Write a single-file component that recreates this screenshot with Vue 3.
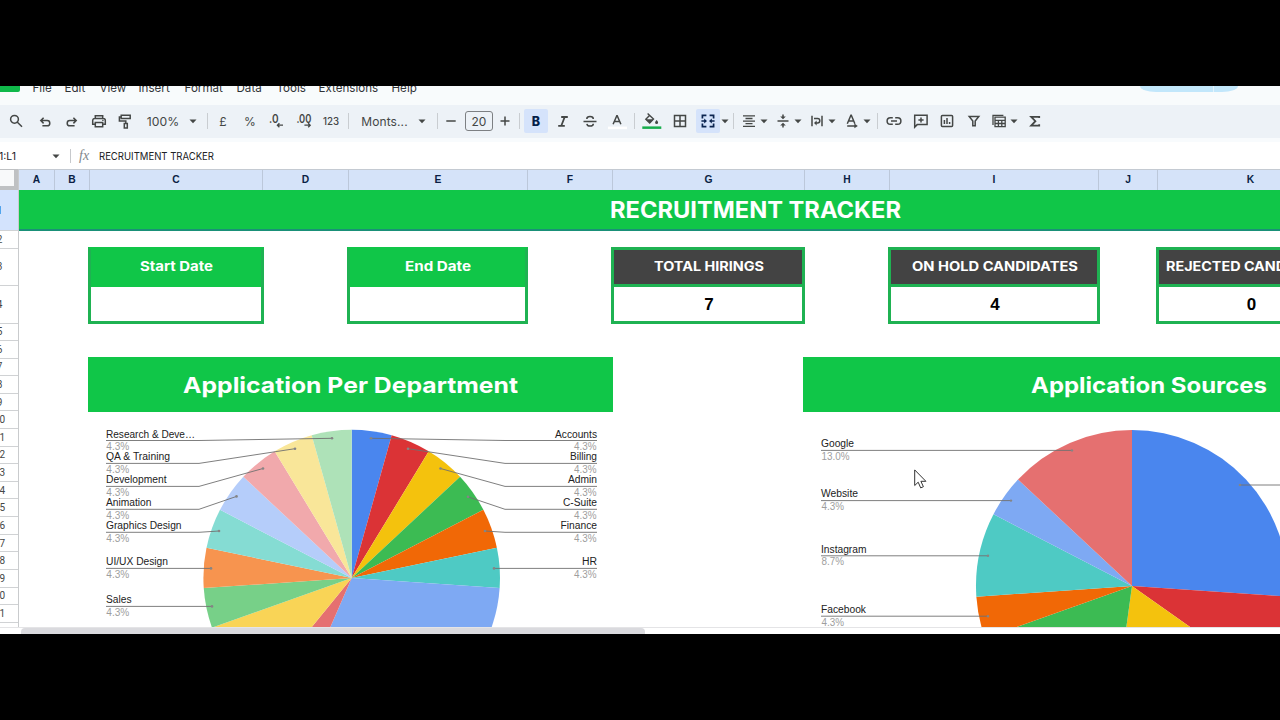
<script setup>
const menus = [
  { label: 'File', w: 32 },
  { label: 'Edit', w: 35 },
  { label: 'View', w: 39 },
  { label: 'Insert', w: 46 },
  { label: 'Format', w: 52 },
  { label: 'Data', w: 40 },
  { label: 'Tools', w: 42 },
  { label: 'Extensions', w: 73 },
  { label: 'Help', w: 40 },
]

// stroke paths on an 18x18 grid, f = filled parts
const icons = {
  search: { s: 'M11.4 7.3a3.9 3.9 0 1 1-7.8 0a3.9 3.9 0 0 1 7.8 0zM10.4 10.2L15 14.8' },
  undo: { s: 'M7.6 5.8L4.8 8.6l2.8 2.8M5 8.6h6.2a2.6 2.6 0 0 1 0 5.2H6.4' },
  redo: { s: 'M10.4 5.8l2.8 2.8l-2.8 2.8M13 8.6H6.8a2.6 2.6 0 0 0 0 5.2h4.8' },
  print: { s: 'M5.3 6.2V3.7h7.4v2.5M5.3 12.3H2.7V8.4a2 2 0 0 1 2-2h8.6a2 2 0 0 1 2 2v3.9h-2.6M5.3 10.6h7.4v4.2H5.3z', f: 'M12.2 7.7h1.4v1.4h-1.4z' },
  paint: { s: 'M5.2 3.3h9v3.2h-9zM5.2 4.9H3.4v4.2h6.4v2.4M8.3 11.6h3v4.3h-3z' },
  minus: { s: 'M4.3 9h9.4' },
  plus: { s: 'M4.5 9h9M9 4.5v9' },
  strike: { s: 'M2.5 9.4h13M12.3 7c0-1.6-1.4-2.5-3.3-2.5S5.8 5.4 5.8 7M5.9 11.8c.2 1.5 1.4 2.3 3.2 2.3c2 0 3.2-.9 3.2-2.4' },
  borders: { s: 'M3.5 3.5h11v11h-11zM9 3.5v11M3.5 9h11' },
  align: { s: 'M3 3.9h12M5.5 6.5h7M3 9.1h12M5.5 11.7h7M3 14.3h12', n: 1.3 },
  valign: { s: 'M3.5 9h11M9 2.4v3M9 15.6v-3', f: 'M6.2 4.4h5.6L9 7.3zM6.2 13.6h5.6L9 10.7z' },
  wrap: { s: 'M4 3.8v10.4M14 3.8v10.4M6 6.6h3.6a1.9 1.9 0 0 1 0 4.4H7.4', f: 'M8.6 8.6v4.8L6 11z' },
  rotate: { s: 'M4.3 11.7L7.9 3.3h.4l3.6 8.4M5.6 9.1h5M4.2 14h8', f: 'M11.4 11.6l3.4 2.4l-3.4 2.2z' },
  link: { s: 'M7.8 5.7H5.4a3.3 3.3 0 0 0 0 6.6h2.4M10.2 5.7h2.4a3.3 3.3 0 0 1 0 6.6h-2.4M6 9h6' },
  comment: { s: 'M2.7 3.3h12.4v9.3H5.2l-2.5 2.5zM9 5.4v5.2M6.4 8h5.2' },
  chart: { s: 'M4.4 3.4h9.2a1 1 0 0 1 1 1v9.2a1 1 0 0 1-1 1H4.4a1 1 0 0 1-1-1V4.4a1 1 0 0 1 1-1zM6.4 8v4M9 6v6M11.6 10v2' },
  filter: { s: 'M4.2 4.4h9.6L10.2 9v4.7H7.8V9z' },
  views: { s: 'M5 5.2h10.2v9.5H5zM5 8.3h10.2M8.4 8.3v6.4M11.8 8.3v6.4M5 11.5h10.2M3 13V3.3h10.4', n: 1.3 },
  sigma: { s: 'M13.2 6V4.8H5.2L9.4 9.2L5.2 13.6h8v-1.3', n: 1.8 },
}

// gap is the space before the item, w its own width
const tools = [
  { gap: 7, w: 18, icon: 'search' },
  { gap: 11, w: 18, icon: 'undo' },
  { gap: 9, w: 18, icon: 'redo' },
  { gap: 9, w: 18, icon: 'print' },
  { gap: 8, w: 18, icon: 'paint' },
  { gap: 13, w: 32, text: '100%', kind: 'zoom' },
  { gap: 10, w: 8, kind: 'caret' },
  { gap: 10, w: 1, kind: 'divider' },
  { gap: 6, w: 18, text: '£' },
  { gap: 9, w: 18, text: '%' },
  { gap: 9, w: 18, kind: 'decrease' },
  { gap: 9, w: 18, kind: 'increase' },
  { gap: 8, w: 20, text: '123', kind: 'digits' },
  { gap: 7, w: 1, kind: 'divider' },
  { gap: 13, w: 45, text: 'Monts...', kind: 'font' },
  { gap: 11, w: 8, kind: 'caret' },
  { gap: 11, w: 1, kind: 'divider' },
  { gap: 4, w: 18, icon: 'minus' },
  { gap: 5, w: 28, text: '20', kind: 'size' },
  { gap: 3, w: 18, icon: 'plus' },
  { gap: 5, w: 1, kind: 'divider' },
  { gap: 4, w: 24, text: 'B', kind: 'active' },
  { gap: 6, w: 18, kind: 'italic' },
  { gap: 9, w: 18, icon: 'strike' },
  { gap: 9, w: 18, kind: 'color' },
  { gap: 8, w: 1, kind: 'divider' },
  { gap: 8, w: 18, kind: 'fill' },
  { gap: 10, w: 18, icon: 'borders' },
  { gap: 7, w: 24, kind: 'merge' },
  { gap: 1, w: 8, kind: 'caret' },
  { gap: 4, w: 1, kind: 'divider' },
  { gap: 6, w: 18, icon: 'align' },
  { gap: 2, w: 8, kind: 'caret' },
  { gap: 6, w: 18, icon: 'valign' },
  { gap: 2, w: 8, kind: 'caret' },
  { gap: 6, w: 18, icon: 'wrap' },
  { gap: 2, w: 8, kind: 'caret' },
  { gap: 7, w: 18, icon: 'rotate' },
  { gap: 2, w: 8, kind: 'caret' },
  { gap: 6, w: 1, kind: 'divider' },
  { gap: 7, w: 18, icon: 'link' },
  { gap: 9, w: 18, icon: 'comment' },
  { gap: 8, w: 18, icon: 'chart' },
  { gap: 9, w: 18, icon: 'filter' },
  { gap: 7, w: 18, icon: 'views' },
  { gap: 2, w: 8, kind: 'caret' },
  { gap: 8, w: 18, icon: 'sigma' },
]

const columns = ['A', 'B', 'C', 'D', 'E', 'F', 'G', 'H', 'I', 'J', 'K']

const rowHeights = [41, 17.5, 37.5, 37.5, 17.5]
const rows = Array.from({ length: 22 }, (_, i) => ({ n: i + 1, h: rowHeights[i] ?? 17.62 }))

const cards = [
  { title: 'Start Date', w: 175.5, tw: 73, value: '', kind: 'date' },
  { title: 'End Date', w: 181.5, tw: 66, value: '', kind: 'date' },
  { title: 'TOTAL HIRINGS', w: 194, tw: 110, value: '7', kind: 'stat' },
  { title: 'ON HOLD CANDIDATES', w: 212, tw: 166, value: '4', kind: 'stat' },
  { title: 'REJECTED CANDIDATES', w: 189, tw: 171, value: '0', kind: 'stat' },
]

function slices(cx, cy, r, parts) {
  const total = parts.reduce((sum, p) => sum + p[0], 0)
  let at = 0
  return parts.map(([n, fill]) => {
    const a = (at / total) * Math.PI * 2
    at += n
    const b = (at / total) * Math.PI * 2
    const large = b - a > Math.PI ? 1 : 0
    return {
      fill,
      d: `M${cx} ${cy}L${cx + r * Math.sin(a)} ${cy - r * Math.cos(a)}A${r} ${r} 0 ${large} 1 ${cx + r * Math.sin(b)} ${cy - r * Math.cos(b)}Z`,
    }
  })
}

const departments = slices(351.7, 578, 148.3, [
  [1, '#4a86ee'],
  [1, '#db3336'],
  [1, '#f4c20d'],
  [1, '#3cbb53'],
  [1, '#f16806'],
  [1, '#4ecac4'],
  [7, '#7ea9f3'],
  [1, '#e57070'],
  [2, '#f9d456'],
  [1, '#77d088'],
  [1, '#f7944f'],
  [1, '#85dcd3'],
  [1, '#b5cdfa'],
  [1, '#f1a9ac'],
  [1, '#f9e699'],
  [1, '#aee2b8'],
])

const sources = slices(1132, 586, 156, [
  [6, '#4a86ee'],
  [2, '#db3336'],
  [4, '#f4c20d'],
  [4, '#3cbb53'],
  [1, '#f16806'],
  [2, '#4ecac4'],
  [1, '#7ea9f3'],
  [3, '#e57070'],
])

// y = underline, dx/dy = end of the leader inside the slice
const leftLabels = [
  { name: 'Research & Deve…', w: 89, y: 440.5, dx: 332, dy: 438.3 },
  { name: 'QA & Training', w: 64, y: 463.4, dx: 295, dy: 448.7 },
  { name: 'Development', w: 60.5, y: 486.4, dx: 263, dy: 468.5 },
  { name: 'Animation', w: 45.5, y: 509.3, dx: 236.5, dy: 496.4 },
  { name: 'Graphics Design', w: 75.5, y: 532.3, dx: 219, dy: 531 },
  { name: 'UI/UX Design', w: 62, y: 568.4, dx: 211, dy: 568.4 },
  { name: 'Sales', w: 25.5, y: 606.4, dx: 212, dy: 606.4 },
]
const rightLabels = [
  { name: 'Accounts', w: 42, y: 440.5, dx: 371, dy: 438.3 },
  { name: 'Billing', w: 27, y: 463.4, dx: 408, dy: 448.7 },
  { name: 'Admin', w: 29, y: 486.4, dx: 440.5, dy: 468.5 },
  { name: 'C-Suite', w: 34, y: 509.3, dx: 468, dy: 496.8 },
  { name: 'Finance', w: 36.5, y: 532.3, dx: 485, dy: 531 },
  { name: 'HR', w: 15, y: 568.4, dx: 494, dy: 568.4 },
]
const sourceLabels = [
  { name: 'Google', w: 33, pct: '13.0%', pw: 28, y: 450.4, dx: 1072 },
  { name: 'Website', w: 37, pct: '4.3%', pw: 22.5, y: 500.6, dx: 1011 },
  { name: 'Instagram', w: 45.5, pct: '8.7%', pw: 22.5, y: 555.8, dx: 988 },
  { name: 'Facebook', w: 45, pct: '4.3%', pw: 22.5, y: 616.2, dx: 988 },
]
</script>

<template>
  <div class="screen">
    <div class="window">
      <header class="menubar">
        <span class="logo" />
        <nav>
          <span v-for="m in menus" :key="m.label" :style="{ width: m.w + 'px' }">{{ m.label }}</span>
        </nav>
        <span class="share"><i /></span>
      </header>

      <div class="toolbar">
        <div
          v-for="(t, i) in tools"
          :key="i"
          class="tool"
          :class="t.kind"
          :style="{ width: t.w + 'px', marginLeft: t.gap + 'px' }"
        >
          <svg v-if="t.icon" viewBox="0 0 18 18" class="icon">
            <path :d="icons[t.icon].s" :stroke-width="icons[t.icon].n || 1.5" />
            <path v-if="icons[t.icon].f" :d="icons[t.icon].f" class="solid" />
          </svg>
          <svg v-else-if="t.kind === 'caret'" viewBox="0 0 8 5" width="8" height="5"><path d="M.5 .5h7L4 4.3z" class="solid" /></svg>
          <svg v-else-if="t.kind === 'decrease'" viewBox="0 0 18 18" class="icon">
            <text x="1" y="10.6" textLength="9.5" lengthAdjust="spacingAndGlyphs">.0</text>
            <path d="M9.4 13.2H15M11.4 11.2l-2 2l2 2" stroke-width="1.3" />
          </svg>
          <svg v-else-if="t.kind === 'increase'" viewBox="0 0 18 18" class="icon">
            <text x="1.4" y="10.6" textLength="15" lengthAdjust="spacingAndGlyphs">.00</text>
            <path d="M9.4 13.2H15M13.2 11.2l2 2l-2 2" stroke-width="1.3" />
          </svg>
          <svg v-else-if="t.kind === 'italic'" viewBox="0 0 18 18" class="icon">
            <path d="M7.2 5h6.6M4.2 13.8h6.6M10.7 5L7.3 13.8" stroke-width="1.8" />
          </svg>
          <svg v-else-if="t.kind === 'color'" viewBox="0 0 18 18" class="icon">
            <path d="M5.1 12.2L8.8 3.8h.4l3.7 8.4M6.4 9.6h5.2" stroke-width="1.5" />
            <path d="M0 14.6h19v2.6H0z" class="swatch white" />
          </svg>
          <svg v-else-if="t.kind === 'fill'" viewBox="0 0 18 18" class="icon">
            <path d="M4.6 1.4l5.9 5.7L6.7 11L2.8 7.2L7 3" stroke-width="1.4" />
            <path d="M3 7.2h7.2L6.7 10.9zM13.6 8c1 1.2 1.5 1.9 1.5 2.5a1.5 1.5 0 0 1-3 0c0-.6.5-1.3 1.5-2.5z" class="solid" />
            <path d="M-.7 14.4h19v2.5h-19z" class="swatch green" />
          </svg>
          <svg v-else-if="t.kind === 'merge'" viewBox="0 0 18 18" class="icon">
            <path d="M7.4 3.4H3.4v3.2M3.4 11.4v3.2h4M10.6 3.4h4v3.2M14.6 11.4v3.2h-4M2.4 9h4M15.6 9h-4" stroke-width="1.7" />
            <path d="M5.2 6.4L8 9l-2.8 2.6zM12.8 6.4L10 9l2.8 2.6z" class="solid" />
          </svg>
          <template v-else>{{ t.text }}</template>
        </div>
      </div>

      <div class="formula">
        <span class="name">1:L1</span>
        <svg viewBox="0 0 8 5" width="8" height="5"><path d="M.5 .5h7L4 4.3z" fill="#444746" /></svg>
        <span class="bar" />
        <i class="fx">fx</i>
        <svg class="content" width="116" height="16"><text x="0" y="12" textLength="115" lengthAdjust="spacingAndGlyphs">RECRUITMENT TRACKER</text></svg>
      </div>

      <div class="sheet">
        <div class="side">
          <div class="corner" />
          <div v-for="r in rows" :key="r.n" class="row-head" :class="{ picked: r.n === 1 }" :style="{ height: r.h + 'px' }">{{ r.n }}</div>
        </div>

        <div class="grid">
          <div class="cols">
            <span v-for="c in columns" :key="c">{{ c }}</span>
          </div>

          <div class="title">
            <svg width="292" height="30"><text x="0" y="23" font-size="22.3" textLength="291" lengthAdjust="spacingAndGlyphs">RECRUITMENT TRACKER</text></svg>
          </div>

          <div class="cards">
            <div v-for="c in cards" :key="c.title" class="card" :class="c.kind" :style="{ width: c.w + 'px' }">
              <div class="card-head">
                <svg :width="c.tw" height="20"><text x="0" y="14.2" font-size="13" :textLength="c.tw" lengthAdjust="spacingAndGlyphs">{{ c.title }}</text></svg>
              </div>
              <div class="card-value">{{ c.value }}</div>
            </div>
          </div>

          <div class="panels">
            <section class="panel departments">
              <h2>
                <svg width="335" height="34"><text x="0" y="25.3" font-size="22" textLength="335" lengthAdjust="spacingAndGlyphs">Application Per Department</text></svg>
              </h2>
              <svg class="plot" viewBox="88 412 525 215" width="525" height="215">
                <path v-for="(s, i) in departments" :key="i" :d="s.d" :fill="s.fill" />
                <g v-for="l in leftLabels" :key="l.name">
                  <path class="leader" :d="`M106 ${l.y}H199L${l.dx} ${l.dy}`" />
                  <circle :cx="l.dx" :cy="l.dy" r="1.3" />
                  <text x="106" :y="l.y - 3" :textLength="l.w" lengthAdjust="spacingAndGlyphs">{{ l.name }}</text>
                  <text x="106.3" :y="l.y + 9.8" textLength="23" lengthAdjust="spacingAndGlyphs" class="pct">4.3%</text>
                </g>
                <g v-for="l in rightLabels" :key="l.name">
                  <path class="leader" :d="`M597 ${l.y}H505L${l.dx} ${l.dy}`" />
                  <circle :cx="l.dx" :cy="l.dy" r="1.3" />
                  <text :x="597 - l.w" :y="l.y - 3" :textLength="l.w" lengthAdjust="spacingAndGlyphs">{{ l.name }}</text>
                  <text x="574" :y="l.y + 9.8" textLength="22.5" lengthAdjust="spacingAndGlyphs" class="pct">4.3%</text>
                </g>
              </svg>
            </section>

            <section class="panel sources">
              <h2>
                <svg width="237" height="34"><text x="0" y="25.3" font-size="22" textLength="236" lengthAdjust="spacingAndGlyphs">Application Sources</text></svg>
              </h2>
              <svg class="plot" viewBox="803 412 692 215" width="692" height="215">
                <path v-for="(s, i) in sources" :key="i" :d="s.d" :fill="s.fill" />
                <g v-for="l in sourceLabels" :key="l.name">
                  <path class="leader" :d="`M821 ${l.y}H${l.dx}`" />
                  <circle :cx="l.dx" :cy="l.y" r="1.2" />
                  <text x="821" :y="l.y - 3.2" :textLength="l.w" lengthAdjust="spacingAndGlyphs">{{ l.name }}</text>
                  <text x="821.5" :y="l.y + 9.4" :textLength="l.pw" lengthAdjust="spacingAndGlyphs" class="pct">{{ l.pct }}</text>
                </g>
                <path class="leader" d="M1240 485H1300" />
                <circle cx="1240" cy="485" r="1.3" />
              </svg>
            </section>
          </div>
        </div>
      </div>

      <div class="scroll"><span /></div>

      <svg class="pointer" viewBox="0 0 14 21" width="14" height="21">
        <path d="M.7 .9v15.6l3.5-3.3l2.5 5.7l2.7-1.2l-2.5-5.4h5z" fill="#fff" stroke="#333" stroke-width="1" />
      </svg>
    </div>
  </div>
</template>

<style>
body {
  margin: 0;
  background: #000;
}
</style>

<style scoped>
.screen {
  width: 1280px;
  height: 720px;
  padding: 86px 0;
  box-sizing: border-box;
  background: #000;
  overflow: hidden;
  font-family: Inter, Roboto, sans-serif;
}

.window {
  position: relative;
  height: 548px;
  overflow: hidden;
  background: #fff;
  display: flex;
  flex-direction: column;
}

.menubar {
  height: 19px;
  flex: none;
  display: flex;
  background: #f8fbfc;
}

.logo {
  width: 20px;
  height: 6px;
  background: #10b84a;
  border-radius: 0 0 2px 0;
}

nav {
  display: flex;
  margin: -6px 0 0 12.5px;
  height: 16px;
  font-size: 11.6px;
  line-height: 16px;
  color: #303236;
  white-space: nowrap;
}

.share {
  width: 98px;
  height: 6px;
  margin-left: 708.5px;
  background: #c2e7fb;
  border-radius: 0 0 16px 16px / 0 0 6px 6px;
}

.share i {
  display: block;
  width: 1px;
  height: 6px;
  margin-left: 73px;
  background: #e4f4fc;
}

.toolbar {
  height: 33px;
  flex: none;
  display: flex;
  align-items: center;
  padding-bottom: 1px;
  box-sizing: border-box;
  background: #edf2f7;
}

.tool {
  flex: none;
  height: 24px;
  display: flex;
  align-items: center;
  justify-content: center;
  color: #444746;
  font-size: 12px;
  white-space: nowrap;
}

.icon {
  width: 18px;
  height: 18px;
  flex: none;
  overflow: visible;
}

.tool path {
  fill: none;
  stroke: #444746;
}

.tool .solid {
  fill: #444746;
  stroke: none;
}

.tool .swatch {
  stroke: none;
}

.tool .white {
  fill: #fff;
}

.tool .green {
  fill: #16ad4c;
}

.tool text {
  font-size: 11.5px;
  font-weight: 600;
  fill: #444746;
}

.zoom {
  font-size: 12.2px;
}

.digits {
  font-size: 9.7px;
  font-weight: 500;
}

.font {
  font-size: 12px;
  letter-spacing: 0.1px;
}

.tool.divider {
  height: 16px;
  background: #c9cdd1;
}

.tool.size {
  height: 20px;
  box-sizing: border-box;
  border: 1px solid #7d8083;
  border-radius: 3px;
}

.active,
.merge {
  background: #d5e3fb;
  border-radius: 2px;
}

.tool.active {
  color: #041e49;
  font-size: 12.5px;
  font-weight: 800;
}

.tool.merge path {
  stroke: #0b2450;
}

.tool.merge .solid {
  fill: #0b2450;
  stroke: none;
}

.formula {
  height: 31px;
  flex: none;
  display: flex;
  align-items: center;
  box-sizing: border-box;
  border-top: 4px solid #f8fbfd;
  padding-top: 1px;
  font-size: 10.5px;
  color: #202124;
  white-space: nowrap;
}

.name {
  width: 53px;
  margin-left: -1px;
  font-size: 10.5px;
}

.bar {
  width: 1px;
  height: 14px;
  margin-left: 10px;
  background: #c7c9cc;
}

.fx {
  width: 20px;
  margin-left: 8px;
  font: italic 14px 'Liberation Serif', serif;
  color: #80868b;
}

.content text {
  font: 10.5px Inter, sans-serif;
  fill: #202124;
}

.sheet {
  flex: none;
  display: flex;
  height: 458px;
  overflow: hidden;
}

.side {
  width: 38px;
  margin-left: -19px;
  flex: none;
  border-right: 1px solid #c9cbcd;
  box-sizing: border-box;
}

.corner {
  height: 21px;
  box-sizing: border-box;
  background: #f8f9fa;
  border: solid #bfc1c3;
  border-width: 1px 4px 4px 0;
}

.row-head {
  box-sizing: border-box;
  border-bottom: 1px solid #d0d2d4;
  display: flex;
  align-items: center;
  justify-content: center;
  font: 10px Roboto, sans-serif;
  color: #444746;
}

.picked {
  background: #d3e3fd;
  color: #041e49;
}

.grid {
  width: 1476px;
  flex: none;
}

.cols {
  display: grid;
  grid-template-columns: 36px 35px 173px 86px 179px 85px 192px 85px 209px 59px 186px;
  height: 21px;
  background: #d5e3f9;
  border-top: 1px solid #c4cad2;
  box-sizing: border-box;
}

.cols span {
  border-right: 1px solid #bcc8da;
  display: flex;
  align-items: center;
  justify-content: center;
  padding-bottom: 2px;
  font: 700 10.3px 'Liberation Sans', sans-serif;
  color: #0a1f45;
}

.title {
  height: 41px;
  box-sizing: border-box;
  background: #10c648;
  border-bottom: 2px solid #199078;
  display: flex;
  align-items: center;
  padding-left: 591px;
}

.title text,
.card-head text,
h2 text {
  fill: #fff;
  font-weight: 700;
  font-family: Inter, sans-serif;
}

.cards {
  display: flex;
  gap: 83px;
  padding: 16px 0 0 69px;
}

.card {
  height: 77px;
  flex: none;
  box-sizing: border-box;
  border: 3px solid #1fb252;
  display: flex;
  flex-direction: column;
}

.card:last-child {
  margin-left: -27px;
}

.card-head {
  height: 37px;
  box-sizing: border-box;
  flex: none;
  display: flex;
  align-items: center;
  justify-content: center;
  padding-left: 2px;
  background: #434343;
  border-bottom: 3px solid #1fb252;
}

.date {
  border-top-color: #10c648;
}

.date .card-head {
  background: #10c648;
  border-bottom-color: #10c648;
}

.card-value {
  flex: 1;
  display: flex;
  align-items: center;
  justify-content: center;
  padding: 1px 0 0 2px;
  font: 700 17px 'Liberation Sans', sans-serif;
  color: #000;
}

.panels {
  display: flex;
  gap: 190px;
  padding: 33px 0 0 69px;
}

.departments {
  width: 525px;
}

.sources {
  width: 692px;
  flex: none;
}

h2 {
  margin: 0;
  height: 55px;
  display: flex;
  align-items: center;
  justify-content: center;
  background: #10c648;
}

.plot {
  display: block;
}

.plot text {
  font: 10px 'Liberation Sans', sans-serif;
  fill: #222;
}

.plot .pct {
  fill: #9e9e9e;
}

.leader {
  fill: none;
  stroke: #707070;
  stroke-width: 0.9;
}

circle {
  fill: #858585;
}

.scroll {
  height: 7px;
  flex: none;
  box-sizing: border-box;
  border-top: 1px solid #e4e4e6;
  background: #fff;
  padding-left: 21px;
}

.scroll span {
  display: block;
  width: 624px;
  height: 6px;
  background: #dadade;
  border-radius: 4px 4px 0 0;
}

.pointer {
  position: absolute;
  left: 914px;
  top: 383px;
}
</style>
